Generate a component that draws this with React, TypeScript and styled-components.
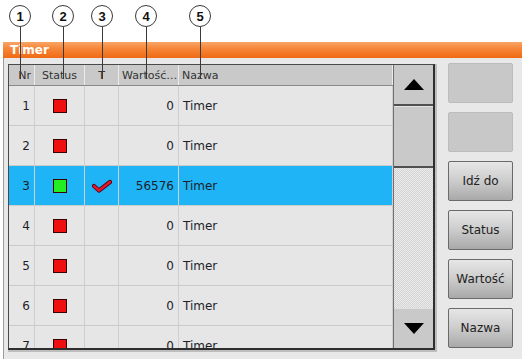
import styled, { createGlobalStyle } from "styled-components";

type TimerRow = {
  nr: number;
  active: boolean;
  checked: boolean;
  value: number;
  name: string;
};

const rows: TimerRow[] = [
  { nr: 1, active: false, checked: false, value: 0, name: "Timer" },
  { nr: 2, active: false, checked: false, value: 0, name: "Timer" },
  { nr: 3, active: true, checked: true, value: 56576, name: "Timer" },
  { nr: 4, active: false, checked: false, value: 0, name: "Timer" },
  { nr: 5, active: false, checked: false, value: 0, name: "Timer" },
  { nr: 6, active: false, checked: false, value: 0, name: "Timer" },
  { nr: 7, active: false, checked: false, value: 0, name: "Timer" },
];

const callouts = [
  { n: 1, x: 20 },
  { n: 2, x: 63 },
  { n: 3, x: 102 },
  { n: 4, x: 146 },
  { n: 5, x: 200 },
];

const buttons = ["", "", "Idź do", "Status", "Wartość", "Nazwa"];

const CheckMark = () => (
  <svg width="20" height="16" viewBox="0 0 20 16">
    <path
      d="M2 8 L7 12.5 L18 4"
      fill="none"
      stroke="#5a0010"
      strokeWidth="4.2"
      strokeLinecap="round"
      strokeLinejoin="round"
    />
    <path
      d="M2 8 L7 12.5 L18 4"
      fill="none"
      stroke="#e0182c"
      strokeWidth="2.4"
      strokeLinecap="round"
      strokeLinejoin="round"
    />
  </svg>
);

const Triangle = ({ up }: { up: boolean }) => (
  <svg width="20" height="11" viewBox="0 0 20 11">
    <path d={up ? "M0 11 L10 0 L20 11 Z" : "M0 0 L10 11 L20 0 Z"} fill="#000" />
  </svg>
);

const App = () => {
  return (
    <>
      <GlobalStyle />
      <Page>
        <Callouts>
          {callouts.map((c) => (
            <Marker key={c.n} style={{ left: c.x }}>
              <Bubble>{c.n}</Bubble>
              <Leader />
            </Marker>
          ))}
        </Callouts>
        <TitleBar>Timer</TitleBar>
        <Panel>
          <TableFrame>
            <Grid>
              <HeadRow>
                <HeadCell $align="right">Nr</HeadCell>
                <HeadCell $align="center">Status</HeadCell>
                <HeadCell $align="center">T</HeadCell>
                <HeadCell $align="left">Wartość…</HeadCell>
                <HeadCell $align="left">Nazwa</HeadCell>
              </HeadRow>
              <Body>
                {rows.map((r) => (
                  <Row key={r.nr} $selected={r.active}>
                    <Cell $align="right">{r.nr}</Cell>
                    <Cell $align="center">
                      <StatusBox $on={r.active} />
                    </Cell>
                    <Cell $align="center">{r.checked && <CheckMark />}</Cell>
                    <Cell $align="right">{r.value}</Cell>
                    <Cell $align="left">{r.name}</Cell>
                  </Row>
                ))}
              </Body>
            </Grid>
            <ScrollBar>
              <ScrollButton>
                <Triangle up />
              </ScrollButton>
              <Thumb />
              <Track />
              <ScrollButton $bottom>
                <Triangle up={false} />
              </ScrollButton>
            </ScrollBar>
          </TableFrame>
          <ButtonColumn>
            {buttons.map((label, i) => (
              <SideButton key={i} $disabled={label === ""}>
                {label}
              </SideButton>
            ))}
          </ButtonColumn>
        </Panel>
      </Page>
    </>
  );
};

const GlobalStyle = createGlobalStyle`
  html, body {
    margin: 0;
    padding: 0;
    background: #ffffff;
  }
  body {
    font-family: "DejaVu Sans", Tahoma, sans-serif;
    font-size: 11px;
    color: #1e1e1e;
  }
`;

const Page = styled.div`
  width: 522px;
  height: 359px;
  overflow: hidden;
  display: flex;
  flex-direction: column;
`;

const Callouts = styled.div`
  position: relative;
  height: 42px;
  flex-shrink: 0;
  z-index: 2;
`;

const Marker = styled.div`
  position: absolute;
  top: 5px;
  width: 0;
  display: flex;
  flex-direction: column;
  align-items: center;
`;

const Bubble = styled.div`
  flex-shrink: 0;
  width: 20px;
  height: 20px;
  border: 1px solid #3a3a3a;
  border-radius: 50%;
  background: #ffffff;
  display: flex;
  align-items: center;
  justify-content: center;
  font-family: "Liberation Sans", Arial, sans-serif;
  font-weight: bold;
  font-size: 13px;
  color: #111;
`;

const Leader = styled.div`
  flex-shrink: 0;
  width: 1px;
  height: 52px;
  background: #3a3a3a;
`;

const TitleBar = styled.div`
  margin-left: 3px;
  height: 16px;
  flex-shrink: 0;
  padding-left: 7px;
  background: linear-gradient(#f9a565 0%, #f6873a 40%, #f06a12 100%);
  color: #ffffff;
  font-weight: bold;
  font-size: 12px;
  line-height: 16px;
`;

const Panel = styled.div`
  flex: 1;
  margin-left: 3px;
  border-left: 1px solid #9c9c9c;
  background: #e8e8e8;
  display: flex;
  align-items: flex-start;
  padding: 5px 9px 0 4px;
  gap: 13px;
`;

const TableFrame = styled.div`
  margin-top: 1px;
  display: flex;
  border-top: 1px solid #4a4a4a;
  border-left: 1px solid #4a4a4a;
  border-right: 2px solid #2e2e2e;
  border-bottom: 2px solid #2e2e2e;
  box-shadow: 1px 1px 0 1px #bdbdbd;
  height: 283px;
  overflow: hidden;
`;

const Grid = styled.div`
  width: 384px;
  display: flex;
  flex-direction: column;
`;

const columns = "26px 50px 34px 60px 214px";

const HeadRow = styled.div`
  display: grid;
  grid-template-columns: ${columns};
  height: 20px;
  background: #c9c9c9;
  border-bottom: 1px solid #8a8a8a;
`;

const HeadCell = styled.div<{ $align: "left" | "right" | "center" }>`
  display: flex;
  align-items: center;
  justify-content: ${(p) =>
    p.$align === "left" ? "flex-start" : p.$align === "right" ? "flex-end" : "center"};
  padding: 0 3px;
  border-right: 1px solid #ececec;
  color: #333;
  white-space: nowrap;
  overflow: hidden;
`;

const Body = styled.div`
  flex: 1;
  overflow: hidden;
  background: #e6e6e6;
`;

const Row = styled.div<{ $selected: boolean }>`
  display: grid;
  grid-template-columns: ${columns};
  height: 40px;
  box-sizing: border-box;
  border-bottom: 1px solid #cbcbcb;
  background: ${(p) => (p.$selected ? "#1fb4f6" : "#e6e6e6")};
`;

const Cell = styled.div<{ $align: "left" | "right" | "center" }>`
  display: flex;
  align-items: center;
  justify-content: ${(p) =>
    p.$align === "left" ? "flex-start" : p.$align === "right" ? "flex-end" : "center"};
  padding: 0 4px;
  border-right: 1px solid #cfcfcf;
  font-size: 12px;
  color: #1e1e2a;
  white-space: nowrap;
`;

const StatusBox = styled.div<{ $on: boolean }>`
  width: 12px;
  height: 12px;
  border: 1px solid #3a0000;
  background: ${(p) => (p.$on ? "#22ee22" : "#ee1010")};
  margin-left: 1px;
`;

const ScrollBar = styled.div`
  width: 40px;
  display: flex;
  flex-direction: column;
  border-left: 1px solid #707070;
  box-sizing: border-box;
`;

const ScrollButton = styled.div<{ $bottom?: boolean }>`
  height: 39px;
  flex-shrink: 0;
  background: #c9c9c9;
  border-bottom: ${(p) => (p.$bottom ? "none" : "2px solid #505050")};
  border-top: ${(p) => (p.$bottom ? "1px solid #e0e0e0" : "none")};
  display: flex;
  align-items: center;
  justify-content: center;
`;

const Thumb = styled.div`
  height: 59px;
  flex-shrink: 0;
  background: #c9c9c9;
  border-top: 1px solid #e2e2e2;
  border-bottom: 2px solid #505050;
`;

const Track = styled.div`
  flex: 1;
  background: repeating-conic-gradient(#d2d2d2 0% 25%, #ececec 0% 50%) 0 0 / 2px 2px;
`;

const ButtonColumn = styled.div`
  display: flex;
  flex-direction: column;
  gap: 9px;
`;

const SideButton = styled.div<{ $disabled: boolean }>`
  width: 65px;
  height: 40px;
  box-sizing: border-box;
  border-radius: 2px;
  display: flex;
  align-items: center;
  justify-content: center;
  font-size: 12px;
  color: #222;
  border: 1px solid ${(p) => (p.$disabled ? "#bcbcbc" : "#6a6a6a")};
  background: ${(p) =>
    p.$disabled ? "#c8c8c8" : "linear-gradient(#e6e6e6 0%, #cfcfcf 45%, #a9a9a9 100%)"};
`;

export default App;
